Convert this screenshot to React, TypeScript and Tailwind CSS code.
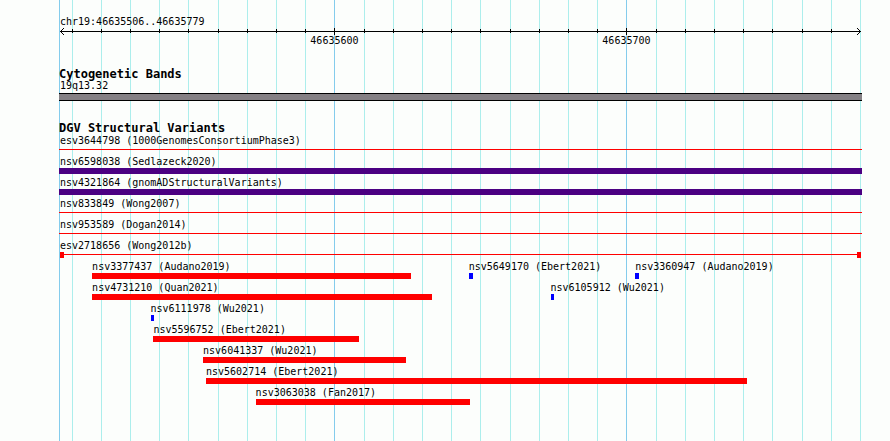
import clsx from 'clsx';

type Glyph = 'bar' | 'line' | 'span';

type Variant = {
  id: string;
  study: string;
  start: number;
  end: number;
  color: string;
  glyph?: Glyph;
};

const REGION_START = 46635506;
const REGION_END = 46635780;
const REGION_LENGTH = REGION_END - REGION_START;

const RED = 'bg-[#ff0000]';
const BLUE = 'bg-[#0000ff]';
const INDIGO = 'bg-[#4b0082]';

// One entry per row, variants that don't collide share a row
const ROWS: Variant[][] = [
  [{ id: 'esv3644798', study: '1000GenomesConsortiumPhase3', start: REGION_START, end: REGION_END, color: RED, glyph: 'line' }],
  [{ id: 'nsv6598038', study: 'Sedlazeck2020', start: REGION_START, end: REGION_END, color: INDIGO }],
  [{ id: 'nsv4321864', study: 'gnomADStructuralVariants', start: REGION_START, end: REGION_END, color: INDIGO }],
  [{ id: 'nsv833849', study: 'Wong2007', start: REGION_START, end: REGION_END, color: RED, glyph: 'line' }],
  [{ id: 'nsv953589', study: 'Dogan2014', start: REGION_START, end: REGION_END, color: RED, glyph: 'line' }],
  [{ id: 'esv2718656', study: 'Wong2012b', start: REGION_START, end: REGION_END, color: RED, glyph: 'span' }],
  [
    { id: 'nsv3377437', study: 'Audano2019', start: 46635517, end: 46635626, color: RED },
    { id: 'nsv5649170', study: 'Ebert2021', start: 46635646, end: 46635647, color: BLUE },
    { id: 'nsv3360947', study: 'Audano2019', start: 46635703, end: 46635704, color: BLUE },
  ],
  [
    { id: 'nsv4731210', study: 'Quan2021', start: 46635517, end: 46635633, color: RED },
    { id: 'nsv6105912', study: 'Wu2021', start: 46635674, end: 46635675, color: BLUE },
  ],
  [{ id: 'nsv6111978', study: 'Wu2021', start: 46635537, end: 46635538, color: BLUE }],
  [{ id: 'nsv5596752', study: 'Ebert2021', start: 46635538, end: 46635608, color: RED }],
  [{ id: 'nsv6041337', study: 'Wu2021', start: 46635555, end: 46635624, color: RED }],
  [{ id: 'nsv5602714', study: 'Ebert2021', start: 46635556, end: 46635741, color: RED }],
  [{ id: 'nsv3063038', study: 'Fan2017', start: 46635573, end: 46635646, color: RED }],
];

const TICKS = Array.from({ length: 28 }, (_, i) => 46635510 + i * 10);

function isMajor(position: number) {
  return position % 100 === 0;
}

function percent(bases: number) {
  return `${(bases / REGION_LENGTH) * 100}%`;
}

function GridLines() {
  return (
    <div className="absolute inset-0" aria-hidden="true">
      <div className="absolute inset-y-0 -left-px w-px bg-[#84ccec]" />
      {TICKS.map((position) => (
        <div
          key={position}
          className={clsx(
            'absolute inset-y-0 w-px',
            isMajor(position) ? 'bg-[#84ccec]' : 'bg-[#aceeec]'
          )}
          style={{ left: percent(position - REGION_START) }}
        />
      ))}
    </div>
  );
}

function Ruler() {
  return (
    <div className="relative -mr-px h-[18px]">
      <div className="flex h-[7px] items-center">
        <svg className="-mr-1 h-[7px] w-1 shrink-0" viewBox="0 0 4 7" shapeRendering="crispEdges">
          <path d="M3 0h1v1H3zM2 1h1v1H2zM1 2h1v1H1zM0 3h1v1H0zM1 4h1v1H1zM2 5h1v1H2zM3 6h1v1H3z" />
        </svg>
        <div className="h-px flex-1 bg-black" />
        <svg className="-ml-1 h-[7px] w-1 shrink-0" viewBox="0 0 4 7" shapeRendering="crispEdges">
          <path d="M0 0h1v1H0zM1 1h1v1H1zM2 2h1v1H2zM3 3h1v1H3zM2 4h1v1H2zM1 5h1v1H1zM0 6h1v1H0z" />
        </svg>
      </div>
      <div className="absolute inset-y-0 right-px left-0">
        {TICKS.filter((position) => position < REGION_END).map((position) => (
          <div
            key={position}
            className={clsx(
              'absolute w-px bg-black',
              isMajor(position) ? 'top-0 h-[7px]' : 'top-px h-1'
            )}
            style={{ left: percent(position - REGION_START) }}
          />
        ))}
        {TICKS.filter(isMajor).map((position) => (
          <span
            key={position}
            className="absolute top-[7px] -translate-x-1/2"
            style={{ left: percent(position - REGION_START) }}
          >
            {position}
          </span>
        ))}
      </div>
    </div>
  );
}

function VariantGlyph({ variant }: { variant: Variant }) {
  const { start, end, color, glyph = 'bar' } = variant;

  if (glyph === 'line') {
    return (
      <div className="-mr-0.5 -ml-px h-1.5 pt-0.5">
        <div className={clsx('h-px', color)} />
      </div>
    );
  }

  if (glyph === 'span') {
    return (
      <div className="-mr-px flex h-1.5">
        <div className={clsx('w-1', color)} />
        <div className={clsx('mt-0.5 h-px flex-1', color)} />
        <div className={clsx('w-1', color)} />
      </div>
    );
  }

  if (end - start === REGION_LENGTH) {
    return <div className={clsx('-mr-0.5 -ml-px h-1.5', color)} />;
  }

  return (
    <div
      className={clsx('h-1.5', color)}
      style={{
        marginLeft: percent(start - REGION_START),
        width: `calc(${percent(end - start)} + 1px)`,
      }}
    />
  );
}

function VariantRow({ variants }: { variants: Variant[] }) {
  return (
    <li className="grid grid-cols-1">
      {variants.map((variant) => (
        <div key={variant.id} className="col-start-1 row-start-1 pt-[3px]">
          <div
            className="whitespace-nowrap"
            style={{ marginLeft: percent(variant.start - REGION_START) }}
          >
            {variant.id} ({variant.study})
          </div>
          <VariantGlyph variant={variant} />
        </div>
      ))}
    </li>
  );
}

export default function App() {
  return (
    <main className="min-h-screen overflow-hidden bg-[#fcfefc] pr-[30px] pl-15 font-['DejaVu_Sans_Mono','Liberation_Mono',monospace] text-[10px] leading-3 text-black">
      <div className="relative min-h-screen">
        <GridLines />
        <div className="relative pt-4">
          <p>chr19:46635506..46635779</p>
          <Ruler />

          <section className="pt-[22px]">
            <h2 className="-ml-px text-xs leading-3 font-bold">Cytogenetic Bands</h2>
            <p>19q13.32</p>
            <div className="mt-px -mr-0.5 -ml-px h-2 border-y border-black bg-[#848084]" />
          </section>

          <section className="pt-[21px]">
            <h2 className="-ml-px text-xs leading-3 font-bold">DGV Structural Variants</h2>
            <ul className="-mt-0.5">
              {ROWS.map((variants) => (
                <VariantRow key={variants[0].id} variants={variants} />
              ))}
            </ul>
          </section>
        </div>
      </div>
    </main>
  );
}
